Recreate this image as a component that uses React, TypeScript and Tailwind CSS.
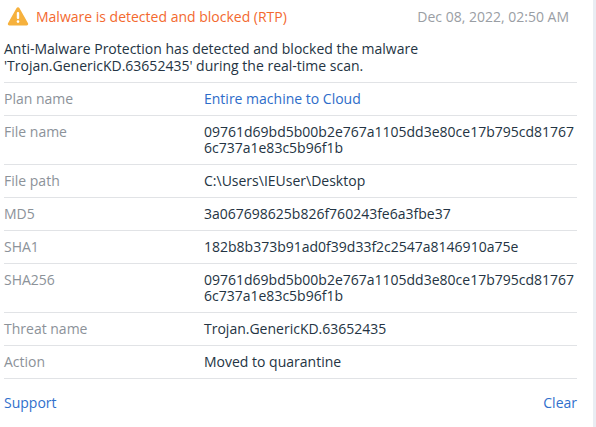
import React from 'react';

interface Row {
  label: string;
  value: string[];
  link?: boolean;
}

const rows: Row[] = [
  { label: 'Plan name', value: ['Entire machine to Cloud'], link: true },
  { label: 'File name', value: ['09761d69bd5b00b2e767a1105dd3e80ce17b795cd81767', '6c737a1e83c5b96f1b'] },
  { label: 'File path', value: ['C:\\Users\\IEUser\\Desktop'] },
  { label: 'MD5', value: ['3a067698625b826f760243fe6a3fbe37'] },
  { label: 'SHA1', value: ['182b8b373b91ad0f39d33f2c2547a8146910a75e'] },
  { label: 'SHA256', value: ['09761d69bd5b00b2e767a1105dd3e80ce17b795cd81767', '6c737a1e83c5b96f1b'] },
  { label: 'Threat name', value: ['Trojan.GenericKD.63652435'] },
  { label: 'Action', value: ['Moved to quarantine'] },
];

function WarningIcon() {
  return (
    <svg width="22" height="20" viewBox="0 0 22 20">
      <path d="M11 1.2c.6 0 1.1.3 1.4.8l8.6 15.2c.6 1-.2 2.3-1.4 2.3H2.4c-1.2 0-2-1.3-1.4-2.3L9.6 2c.3-.5.8-.8 1.4-.8z" fill="#f6b13d" />
      <rect x="9.8" y="6" width="2.4" height="7" rx="1" fill="#fff" />
      <circle cx="11" cy="15.6" r="1.3" fill="#fff" />
    </svg>
  );
}

export default function App() {
  return (
    <div className="flex w-[596px] h-[427px] bg-white font-['Open_Sans',sans-serif] text-[14px]">
      <div className="flex-1 flex flex-col pl-1 pr-4">
        {/* Header */}
        <div className="flex items-center h-[30px] pt-0.5">
          <div className="w-8 flex pl-[3px]">
            <WarningIcon />
          </div>
          <span className="text-[#f3692f]">Malware is detected and blocked (RTP)</span>
          <span className="ml-auto mr-2 text-[#9a9ea4]">Dec 08, 2022, 02:50 AM</span>
        </div>

        <p className="mt-[10px] leading-[17px] text-[#243443]">
          Anti-Malware Protection has detected and blocked the malware<br />
          'Trojan.GenericKD.63652435' during the real-time scan.
        </p>

        <div className="mt-[8px] border-t border-[#e1e3e6]">
          {rows.map((r) => (
            <div key={r.label} className="flex py-2 leading-4 border-b border-[#e1e3e6]">
              <div className="w-[200px] text-[#8c9299]">{r.label}</div>
              <div className={r.link ? 'text-[#2d6cc9]' : 'text-[#243443]'}>
                {r.value.map((v) => (
                  <div key={v}>{v}</div>
                ))}
              </div>
            </div>
          ))}
        </div>

        <div className="flex justify-between mt-[13px] text-[#3070cc]">
          <span>Support</span>
          <span>Clear</span>
        </div>
      </div>
      <div className="w-[3px] bg-[#e9edf3]" />
    </div>
  );
}
